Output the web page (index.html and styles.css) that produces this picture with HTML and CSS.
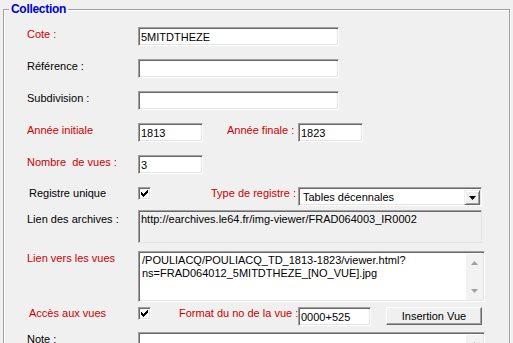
FILE: index.html
```html
<!DOCTYPE html>
<html lang="fr">
<head>
    <meta charset="UTF-8">
    <title>Collection</title>
    <link rel="stylesheet" href="styles.css">
</head>
<body>
    <div class="group">
        <span class="group-title">Collection</span>

        <div class="row">
            <span class="label required">Cote :</span>
            <input class="field w-long" type="text" value="5MITDTHEZE">
        </div>
        <div class="row">
            <span class="label">Référence :</span>
            <input class="field w-long" type="text" value="">
        </div>
        <div class="row">
            <span class="label">Subdivision :</span>
            <input class="field w-long" type="text" value="">
        </div>
        <div class="row">
            <span class="label required">Année initiale</span>
            <input class="field w-year" type="text" value="1813">
            <span class="label required label-end">Année finale :</span>
            <input class="field w-year" type="text" value="1823">
        </div>
        <div class="row">
            <span class="label required">Nombre&nbsp; de vues :</span>
            <input class="field w-year" type="text" value="3">
        </div>

        <!-- Registre unique + type -->
        <div class="row row-check">
            <span class="label indent flush">Registre unique</span>
            <span class="check">
                <svg width="7" height="7" viewBox="0 0 7 7"><path d="M0 2h1v1h1v1h1v-1h1v-1h1v-1h1v-1h1v3h-1v1h-1v1h-1v1h-1v1h-1v-1h-1v-1h-1z" fill="#000"/></svg>
            </span>
            <span class="label required flush label-type">Type de registre :</span>
            <div class="select">
                <span class="select-text">Tables décennales</span>
                <span class="select-button">
                    <svg width="7" height="4" viewBox="0 0 7 4"><path d="M0 0h7l-3.5 4z" fill="#000"/></svg>
                </span>
            </div>
        </div>

        <div class="row row-archive">
            <span class="label label-archive">Lien des archives :</span>
            <div class="readonly">http://earchives.le64.fr/img-viewer/FRAD064003_IR0002</div>
        </div>

        <div class="row row-views">
            <span class="label required">Lien vers les vues</span>
            <div class="memo">
                <div class="memo-text">/POULIACQ/POULIACQ_TD_1813-1823/viewer.html?<br>ns=FRAD064012_5MITDTHEZE_[NO_VUE].jpg</div>
                <div class="scrollbar">
                    <svg width="7" height="4" viewBox="0 0 7 4"><path d="M0 4h7l-3.5-4z" fill="#a0a0a0"/></svg>
                    <svg width="7" height="4" viewBox="0 0 7 4"><path d="M0 0h7l-3.5 4z" fill="#a0a0a0"/></svg>
                </div>
            </div>
        </div>

        <div class="row row-access">
            <span class="label required indent flush">Accès aux vues</span>
            <span class="check">
                <svg width="7" height="7" viewBox="0 0 7 7"><path d="M0 2h1v1h1v1h1v-1h1v-1h1v-1h1v-1h1v3h-1v1h-1v1h-1v1h-1v1h-1v-1h-1v-1h-1z" fill="#000"/></svg>
            </span>
            <span class="label required flush label-format">Format du no de la vue :</span>
            <input class="field w-format" type="text" value="0000+525">
            <button class="button" type="button">Insertion Vue</button>
        </div>

        <div class="row">
            <span class="label">Note :</span>
            <div class="memo">
                <div class="memo-text"></div>
                <div class="scrollbar">
                    <svg width="7" height="4" viewBox="0 0 7 4"><path d="M0 4h7l-3.5-4z" fill="#a0a0a0"/></svg>
                    <svg width="7" height="4" viewBox="0 0 7 4"><path d="M0 0h7l-3.5 4z" fill="#a0a0a0"/></svg>
                </div>
            </div>
        </div>
    </div>
</body>
</html>
```

FILE: styles.css
```css
/* Remise à zéro */
* {
    margin: 0;
    padding: 0;
    box-sizing: border-box;
}

html, body {
    overflow: hidden;
}

/* Fenêtre façon Windows classique */
body {
    font-family: "Liberation Sans", Arial, sans-serif;
    font-size: 11px;
    line-height: 13px;
    color: #000;
    background-color: #f0f0f0;
    width: 513px;
    height: 343px;
}

/* Cadre "Collection" */
.group {
    position: relative;
    margin: 9px 3px 0 3px;
    height: 420px;
    border: 1px solid #a0a0a0;
    box-shadow: inset 1px 1px #fff, 1px 1px #fff;
    padding: 17px 0 0 23px;
}

.group-title {
    position: absolute;
    top: -8px;
    left: 5px;
    padding: 0 2px;
    background-color: #f0f0f0;
    color: #0000cc;
    font-size: 12px;
    font-weight: bold;
    line-height: 14px;
    letter-spacing: -0.3px;
}

/* Lignes du formulaire */
.row {
    display: flex;
    align-items: flex-start;
    height: 32px;
}

.row-check {
    height: 23px;
}

.row-archive {
    height: 41px;
}

.row-views {
    height: 56px;
}

.row-access {
    height: 25px;
}

.label {
    width: 111px;
    padding-top: 1px;
    white-space: nowrap;
}

.label.indent {
    padding-left: 2px;
}

.label.flush {
    padding-top: 0;
}

.label-end {
    width: 71px;
    margin-left: 24px;
}

.label-type {
    width: 87px;
    margin-left: 60px;
}

.label-format {
    width: 119px;
    margin-left: 28px;
}

.label-archive {
    padding-top: 3px;
}

.required {
    color: #cc0000;
}

/* Zones de saisie (bordure enfoncée) */
.field {
    height: 19px;
    border: 1px solid;
    border-color: #a0a0a0 #fff #fff #a0a0a0;
    box-shadow: inset 1px 1px #696969, inset -1px -1px #e3e3e3;
    background-color: #fff;
    font: inherit;
    color: #000;
    padding: 2px;
    outline: none;
}

.w-long {
    width: 201px;
}

.w-year {
    width: 65px;
}

.w-format {
    width: 73px;
}

/* Case à cocher */
.check {
    width: 13px;
    height: 13px;
    border: 1px solid;
    border-color: #a0a0a0 #fff #fff #a0a0a0;
    box-shadow: inset 1px 1px #696969, inset -1px -1px #e3e3e3;
    background-color: #fff;
    display: flex;
    align-items: center;
    justify-content: center;
}

.check svg {
    display: block;
}

/* Liste déroulante */
.select {
    width: 184px;
    height: 19px;
    display: flex;
    border: 1px solid;
    border-color: #a0a0a0 #fff #fff #a0a0a0;
    box-shadow: inset 1px 1px #696969, inset -1px -1px #e3e3e3;
    background-color: #fff;
    padding: 2px 1px 1px 2px;
}

.select-text {
    flex: 1;
    padding: 1px 0 0 2px;
}

.select-button {
    width: 16px;
    height: 15px;
    display: flex;
    align-items: center;
    justify-content: center;
    background-color: #f0f0f0;
    border: 1px solid;
    border-color: #f0f0f0 #696969 #696969 #f0f0f0;
    box-shadow: inset 1px 1px #fff, inset -1px -1px #a0a0a0;
}

/* Champ en lecture seule */
.readonly {
    width: 344px;
    height: 33px;
    border: 1px solid;
    border-color: #a0a0a0 #e3e3e3 #e3e3e3 #a0a0a0;
    box-shadow: inset 1px 1px #696969;
    background-color: #f0f0f0;
    padding: 2px 2px;
    white-space: nowrap;
}

/* Zones multilignes */
.memo {
    width: 347px;
    height: 51px;
    display: flex;
    border: 1px solid;
    border-color: #a0a0a0 #fff #fff #a0a0a0;
    box-shadow: inset 1px 1px #696969, inset -1px -1px #e3e3e3;
    background-color: #fff;
    padding: 2px 1px 1px 2px;
}

.memo-text {
    flex: 1;
    padding: 0 1px;
    white-space: nowrap;
}

.scrollbar {
    width: 17px;
    background-color: #f2f2f2;
    display: flex;
    flex-direction: column;
    justify-content: space-between;
    align-items: center;
    padding: 7px 0;
}

.scrollbar svg {
    display: block;
}

/* Bouton */
.button {
    width: 96px;
    height: 18px;
    margin-left: 15px;
    font: inherit;
    color: #000;
    background-color: #f0f0f0;
    border: 1px solid;
    border-color: #fff #696969 #696969 #fff;
    box-shadow: inset -1px -1px #a0a0a0;
    text-align: center;
}
```
